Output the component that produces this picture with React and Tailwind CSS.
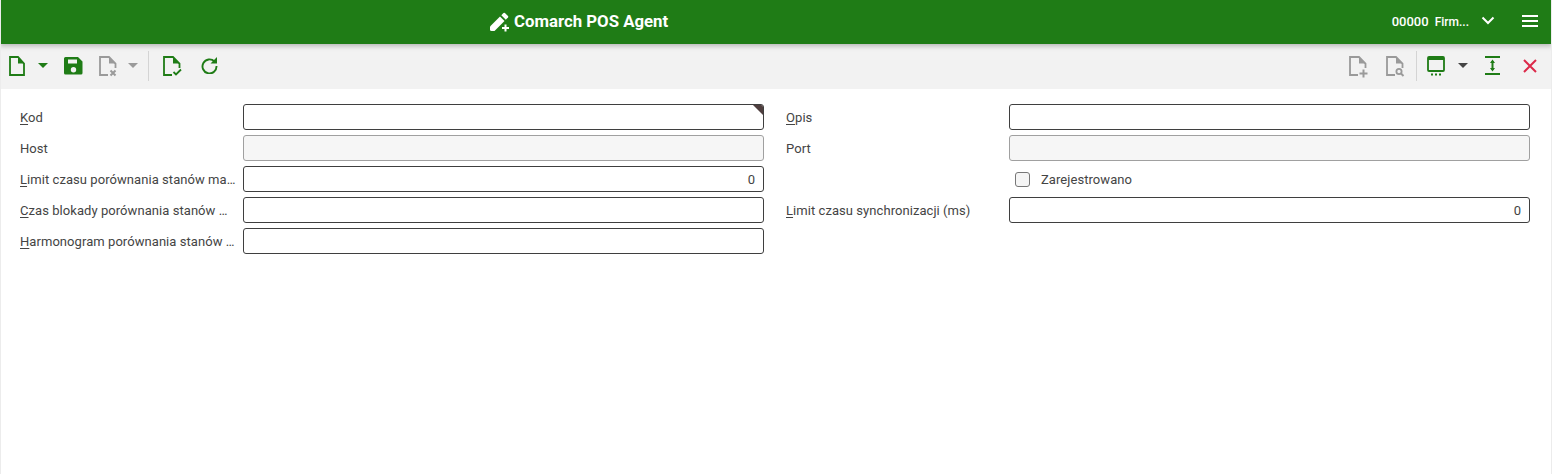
const green = "#1f7c16";
const gray = "#9a9a9a";

const DocIcon = ({ color = green, open, children }) => (
  <svg className="overflow-visible" width="18" height="20" viewBox="0 0 18 20" fill="none">
    {open ? (
      <path d="M9 19H1V1h9l6.500 6.500V12" stroke={color} strokeWidth="1.800" />
    ) : (
      <path d="M2 1h8l6 6.500V19H2z" stroke={color} strokeWidth="1.800" />
    )}
    <path d="M10 1v6.500h6.500z" fill={color} />
    {children}
  </svg>
);

const Caret = ({ color = green }) => (
  <svg width="10" height="5" viewBox="0 0 10 5">
    <path d="M0 0h10L5 5z" fill={color} />
  </svg>
);

const Label = ({ first, rest, className = "" }) => (
  <label className={`truncate pt-px pr-[6px] text-[13px] tracking-[0.06px] text-[#444444] ${className}`}>
    {first ? <span className="underline underline-offset-2">{first}</span> : null}
    {rest}
  </label>
);

const Field = ({ value, disabled, marked }) => (
  <div
    className={`relative flex h-[26px] items-center justify-end overflow-hidden rounded-[3px] border px-2 pt-px text-[13px] text-[#444444] ${
      disabled ? "border-[#a0a0a0] bg-[#f6f6f6]" : "border-[#3f3f3f] bg-white"
    }`}
  >
    {value}
    {marked ? (
      <svg className="absolute top-0 right-0" width="10" height="10" viewBox="0 0 10 10">
        <path d="M0 0h10v10z" fill="#4f3f3f" />
      </svg>
    ) : null}
  </div>
);

export default function App() {
  return (
    <div
      className="flex h-[474px] flex-col overflow-hidden border-x border-[#ececec] bg-white"
      style={{ fontFamily: "Roboto, sans-serif" }}
    >
      <header className="z-10 -mx-px flex h-[44px] shrink-0 items-center bg-[#1f7c16] shadow-[0_2px_5px_rgba(0,0,0,0.25)]">
        <div className="ml-[489px] flex items-center gap-[3px] text-white">
          <svg width="22" height="22" viewBox="0 0 22 22" fill="white">
            <path d="M1 15.500 11 5.500l4.500 4.500-10 10H2.500A1.500 1.500 0 0 1 1 18.500z" />
            <path d="m12.300 4.200 2.200-2.200a1 1 0 0 1 1.400 0l3.100 3.100a1 1 0 0 1 0 1.400l-2.200 2.200z" />
            <path d="M15.500 13.500h2v2.500H20v2h-2.500v2.500h-2V18H13v-2h2.500z" />
          </svg>
          <span className="text-[16.8px] font-bold">Comarch POS Agent</span>
        </div>
        <div className="ml-auto flex items-center text-white">
          <span className="text-[13px] font-medium">00000</span>
          <span className="ml-[6px] text-[12px] font-medium">Firm...</span>
          <svg className="mb-[3px] ml-[12px]" width="14" height="9" viewBox="0 0 14 9" fill="none">
            <path d="m1.500 1.500 5.500 5.500 5.500-5.500" stroke="white" strokeWidth="2" />
          </svg>
          <svg className="mr-[14px] mb-[2px] ml-[27px]" width="16" height="12" viewBox="0 0 16 12" fill="white">
            <rect width="16" height="2" />
            <rect y="5" width="16" height="2" />
            <rect y="10" width="16" height="2" />
          </svg>
        </div>
      </header>

      <div className="flex h-[45px] shrink-0 items-center bg-[#f2f2f2] pr-[14px] pb-[2px] pl-[7px]">
        <DocIcon />
        <div className="ml-[12px]">
          <Caret />
        </div>
        <svg className="ml-[16px]" width="19" height="19" viewBox="0 0 19 19">
          <path
            fillRule="evenodd"
            d="M1.500 1h12.500l4.500 4.500V17a1.500 1.500 0 0 1-1.500 1.500H1.500A1.500 1.500 0 0 1 0 17V2.500A1.500 1.500 0 0 1 1.500 1zM4 3.500v4h9v-4zm5.500 7.500a2.700 2.700 0 1 0 0 5.400 2.700 2.700 0 0 0 0-5.400z"
            fill={green}
          />
        </svg>
        <div className="ml-[16px]">
          <DocIcon color={gray} open>
            <path d="m11.500 14.500 5 5m0-5-5 5" stroke={gray} strokeWidth="2" />
          </DocIcon>
        </div>
        <div className="ml-[11px]">
          <Caret color={gray} />
        </div>
        <div className="mr-[14px] ml-[10px] h-[30px] w-px bg-[#d4d4d4]" />
        <DocIcon open>
          <path d="m10.500 16 2.500 2.500 5-5" stroke={green} strokeWidth="1.800" />
        </DocIcon>
        <svg className="ml-[20px]" width="17" height="17" viewBox="0 0 17 17" fill="none">
          <path d="M13.500 4.500A7 7 0 1 0 15.500 9" stroke={green} strokeWidth="1.900" />
          <path d="M16 0v6.500H9.500z" fill={green} />
        </svg>

        <div className="ml-auto flex items-center">
          <DocIcon color={gray} open>
            <path d="M10.500 17.500h8M14.500 13.500v8" stroke={gray} strokeWidth="2" />
          </DocIcon>
          <div className="ml-[19px]">
            <DocIcon color={gray} open>
              <circle cx="13" cy="15.500" r="2.600" stroke={gray} strokeWidth="1.800" />
              <path d="m15 17.500 2.500 2.500" stroke={gray} strokeWidth="2" />
            </DocIcon>
          </div>
          <div className="mr-[10px] ml-[12px] h-[30px] w-px bg-[#d4d4d4]" />
          <svg width="18" height="20" viewBox="0 0 18 20" fill="none">
            <rect x="1" y="1" width="16" height="14" rx="1" stroke={green} strokeWidth="1.800" />
            <rect x="1" y="1" width="16" height="3" fill={green} />
            <path d="M4 18.500h2M8 18.500h2M12 18.500h2" stroke={green} strokeWidth="1.800" />
          </svg>
          <div className="ml-[13px]">
            <Caret color="#444444" />
          </div>
          <svg className="ml-[17px]" width="15" height="19" viewBox="0 0 15 19" fill="none">
            <path d="M0 1h15M0 18h15" stroke={green} strokeWidth="1.800" />
            <path d="M7.500 5v9" stroke={green} strokeWidth="2" />
            <path d="M7.500 3.500 10 7H5zM7.500 15.500 10 12H5z" fill={green} />
          </svg>
          <svg className="ml-[23px]" width="14" height="14" viewBox="0 0 14 14" fill="none">
            <path d="m1 1 12 12m0-12L1 13" stroke="#dc2a4a" strokeWidth="2" />
          </svg>
        </div>
      </div>

      <main className="grid grid-cols-[223px_521px_245px_521px] gap-y-[5px] pt-[15px] pl-[19px] [&>label]:self-center">
        <Label first="K" rest="od" />
        <Field marked />
        <Label first="O" rest="pis" className="pl-[22px]" />
        <Field />

        <Label rest="Host" />
        <Field disabled />
        <Label rest="Port" className="pl-[22px]" />
        <Field disabled />

        <Label first="L" rest="imit czasu porównania stanów magazynowych" />
        <Field value="0" />
        <div />
        <div className="flex items-center gap-[11px] pl-[6px] text-[13px] tracking-[0.06px] text-[#444444]">
          <span className="h-[15px] w-[15px] rounded-[3px] border border-[#777777] bg-[#f5f5f5]" />
          <span className="pt-px">Zarejestrowano</span>
        </div>

        <Label first="C" rest="zas blokady porównania stanów magazynowych" />
        <Field />
        <Label first="L" rest="imit czasu synchronizacji (ms)" className="pl-[22px]" />
        <Field value="0" />

        <Label first="H" rest="armonogram porównania stanów magazynowych" />
        <Field />
      </main>
    </div>
  );
}
